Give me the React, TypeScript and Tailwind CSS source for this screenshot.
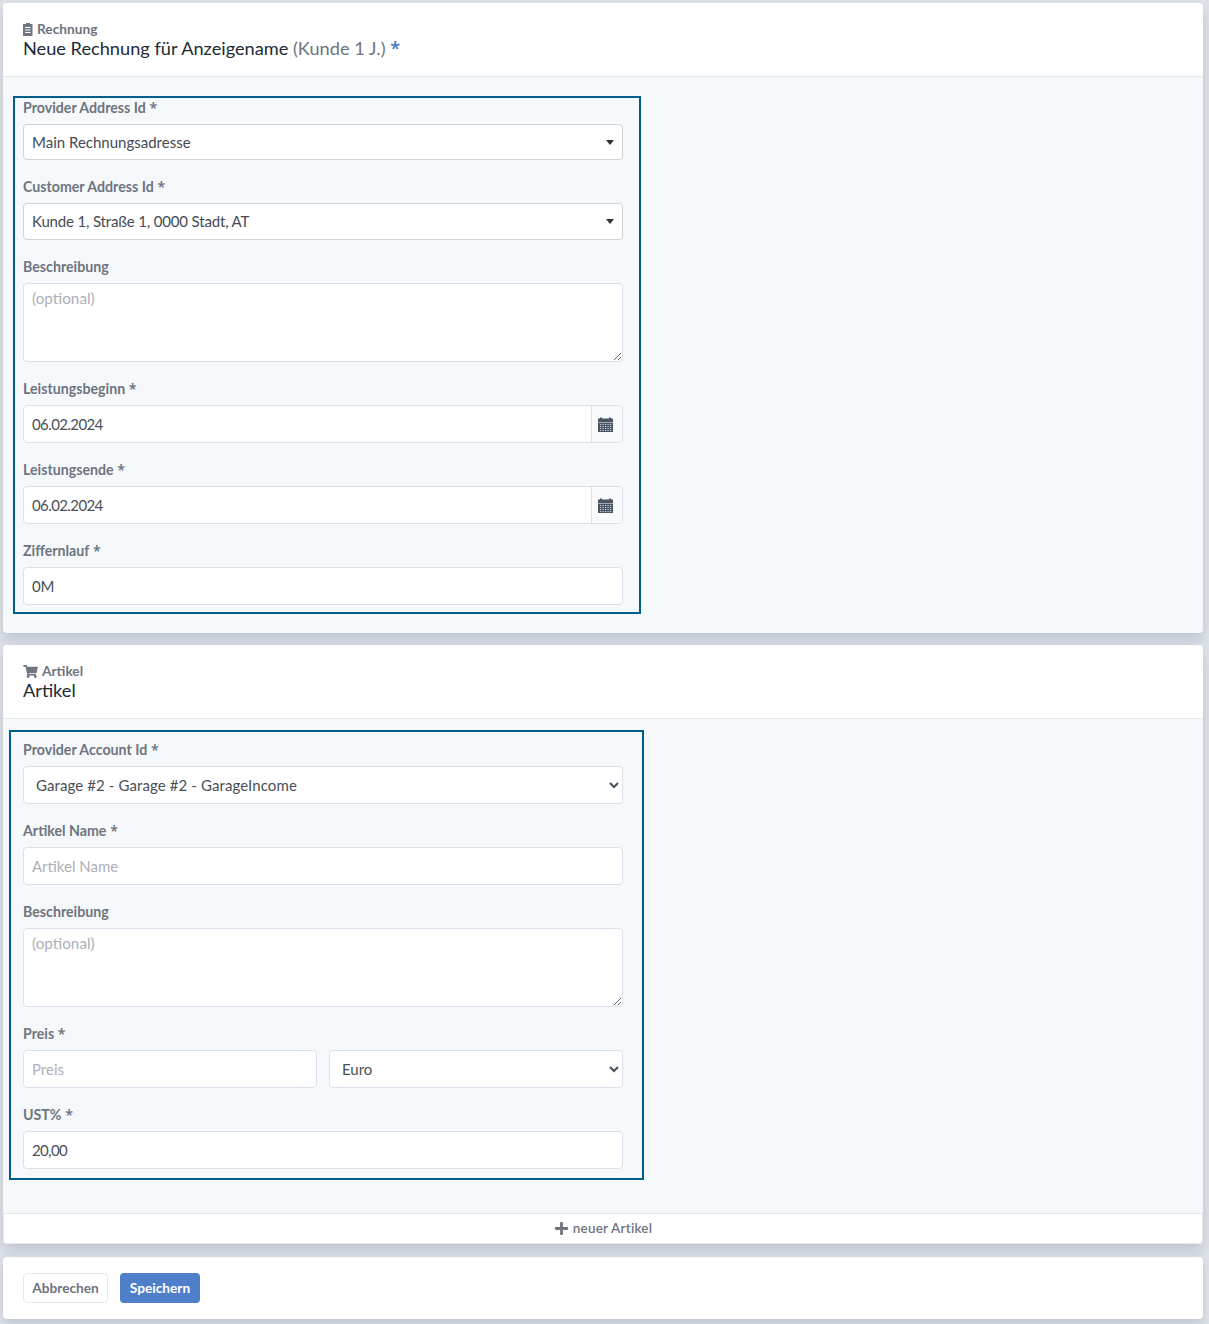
import React from "react";
import { FaPlus, FaShoppingCart } from "react-icons/fa";

const font = "font-['Lato',sans-serif]";
const inputCls =
  "block w-full h-[38px] rounded-[4px] border border-[#dbe1ea] bg-white px-2 text-[15px] text-[#495057] placeholder:text-[#adb0b8] outline-none";
const starCls = "font-['Noto_Sans',sans-serif] font-semibold";

function Label({ text }: { text: string }) {
  const required = text.endsWith(" *");
  return (
    <label className="block h-[19px] mb-[7px] leading-[19px] text-[14.2px] font-bold text-[#6e7480]">
      {required ? text.slice(0, -2) : text}
      {required && <span className={starCls}> *</span>}
    </label>
  );
}

function Group({ label, children, last }: { label: string; children: React.ReactNode; last?: boolean }) {
  return (
    <div className={last ? "" : "mb-[17px]"}>
      <Label text={label} />
      {children}
    </div>
  );
}

function FakeSelect({ value, h, tight }: { value: string; h: string; tight?: boolean }) {
  return (
    <div className={`flex items-center justify-between rounded-[4px] border border-[#d1d5db] bg-white pl-2 pr-[8px] text-[15px] text-[#444b55] ${h}`}>
      <span className={tight ? "tracking-[-0.16px]" : ""}>{value}</span>
      <span className="w-0 h-0 border-x-[4px] border-x-transparent border-t-[5px] border-t-[#333]" />
    </div>
  );
}

function CalendarIcon() {
  const dots: React.ReactNode[] = [];
  for (const y of [7, 9, 11, 13]) {
    for (const x of [2, 4.5, 7, 9.5, 12]) {
      dots.push(<rect key={`${x}-${y}`} x={x} y={y} width="1.2" height="1" fill="#cfd5de" />);
    }
  }
  return (
    <svg viewBox="0 0 15 15" className="h-[15px] w-[15px]" aria-hidden="true">
      <path fill="#4b5563" d="M2 .5h2v1h7v-1h2v1h2V5H0V1.5h2zM0 5.6h15V15H0z" />
      {dots}
    </svg>
  );
}

function DateInput() {
  return (
    <div className="flex h-[38px] rounded-[4px] border border-[#dbe1ea] bg-white overflow-hidden">
      <input defaultValue="06.02.2024" className="flex-1 min-w-0 pl-2 pr-2 text-[15px] tracking-[-0.6px] text-[#495057] outline-none" />
      <span className="flex w-[31px] items-center justify-center border-l border-[#dbe1ea] bg-[#f9fafb] pr-[3px]">
        <CalendarIcon />
      </span>
    </div>
  );
}

function Area() {
  return <textarea placeholder="(optional)" className="block w-full h-[79px] rounded-[4px] border border-[#dbe1ea] bg-white px-2 py-[3px] text-[15.3px] text-[#495057] placeholder:text-[#adb0b8] outline-none" />;
}

function FileIcon() {
  return (
    <svg viewBox="0 0 10 13" className="h-[13px] w-[10px] text-[#6e7480]" aria-hidden="true">
      <path fill="currentColor" fillRule="evenodd" d="M0 1h3V0h4v1h2.5v12H0V1zM2 4h5.5v1H2V4zm0 2.5h5.5v1H2v-1zM2 9h5.5v1H2V9z" />
    </svg>
  );
}

function Header({ icon, kicker, children }: { icon: React.ReactNode; kicker: string; children: React.ReactNode }) {
  return (
    <div className="h-[74px] border-b border-[#e3e7ee] bg-white pl-5 pt-[17px] rounded-t-[4px]">
      <div className="flex items-center gap-[4px] h-[18px] text-[13.7px] font-bold leading-[18px] text-[#6e7480]">
        {icon}
        {kicker}
      </div>
      <div className="text-[18.2px] font-normal leading-[21px] text-[#212b36]">{children}</div>
    </div>
  );
}

export default function App() {
  return (
    <div className={`${font} min-h-[1324px] bg-[#dfe3ea] px-[3px] pt-[3px] pr-[6px]`}>
      <section className="h-[630px] rounded-[4px] bg-[#f6f9fc] shadow-[0_6px_14px_rgba(90,100,120,0.25)]">
        <Header icon={<FileIcon />} kicker="Rechnung">
          Neue Rechnung für Anzeigename <span className="text-[#6e7480]">(Kunde 1 J.)</span> <span className={`${starCls} text-[#4f7ecb]`}>*</span>
        </Header>
        <div className="ml-[10px] mt-[19px] w-[628px] h-[518px] border-2 border-[#005f8a] pl-2 pr-4">
          <Group label="Provider Address Id *"><FakeSelect value="Main Rechnungsadresse" h="h-[36px]" /></Group>
          <Group label="Customer Address Id *"><FakeSelect value="Kunde 1, Straße 1, 0000 Stadt, AT" h="h-[37px]" tight /></Group>
          <Group label="Beschreibung"><Area /></Group>
          <Group label="Leistungsbeginn *"><DateInput /></Group>
          <Group label="Leistungsende *"><DateInput /></Group>
          <Group label="Ziffernlauf *" last><input defaultValue="0M" className={`${inputCls} tracking-[-0.3px]`} /></Group>
        </div>
      </section>

      <section className="mt-[12px] h-[599px] rounded-[4px] bg-[#f6f9fc] shadow-[0_6px_14px_rgba(90,100,120,0.25)] flex flex-col">
        <Header icon={<FaShoppingCart className="h-[13px] w-[15px]" />} kicker="Artikel">Artikel</Header>
        <div className="ml-[6px] mt-[11px] w-[635px] h-[450px] border-2 border-[#005f8a] pl-3 pr-[19px] pt-2">
          <Group label="Provider Account Id *">
            <select defaultValue="g" className={`${inputCls} px-2 tracking-[0.1px]`}>
              <option value="g">Garage #2 - Garage #2 - GarageIncome</option>
            </select>
          </Group>
          <Group label="Artikel Name *"><input placeholder="Artikel Name" className={inputCls} /></Group>
          <Group label="Beschreibung"><Area /></Group>
          <Group label="Preis *">
            <div className="flex gap-3">
              <input placeholder="Preis" className={inputCls} />
              <select defaultValue="e" className={inputCls}>
                <option value="e">Euro</option>
              </select>
            </div>
          </Group>
          <Group label="UST% *" last><input defaultValue="20,00" className={`${inputCls} tracking-[-0.6px]`} /></Group>
        </div>
        <div className="mt-auto flex h-[31px] items-center justify-center gap-1 rounded-b-[4px] border border-[#e3e7ee] bg-white text-[13.5px] font-semibold tracking-[0.2px] text-[#6e7480]">
          <FaPlus className="h-[15px] w-[15px]" />
          neuer Artikel
        </div>
      </section>

      <section className="mt-[13px] flex h-[62px] items-center gap-3 rounded-[4px] bg-white pl-5 shadow-[0_4px_10px_rgba(90,100,120,0.25)]">
        <button className="h-[30px] w-[85px] rounded-[4px] border border-[#e3e7ee] bg-white text-[13.7px] font-bold text-[#6e7480]">Abbrechen</button>
        <button className="h-[30px] w-[80px] rounded-[4px] bg-[#4f7ecb] text-[13.7px] font-bold text-white">Speichern</button>
      </section>
    </div>
  );
}
